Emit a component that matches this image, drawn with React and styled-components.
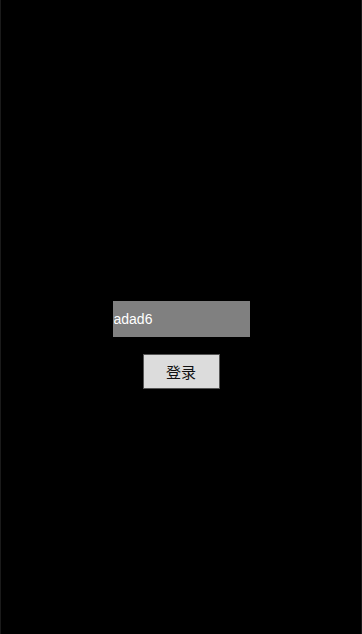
import styled, { createGlobalStyle } from "styled-components";

const GlobalStyle = createGlobalStyle`
  html, body {
    margin: 0;
    padding: 0;
    background: #000;
  }
`;

const Page = styled.div`
  box-sizing: border-box;
  width: 362px;
  height: 634px;
  background: #000;
  border-left: 1px solid #1a1a1a;
  border-right: 1px solid #1a1a1a;
  display: flex;
  flex-direction: column;
  align-items: center;
  padding-top: 301px;
  gap: 17px;
  font-family: "Liberation Sans", "Noto Sans CJK SC", sans-serif;
`;

const NameInput = styled.input`
  box-sizing: border-box;
  width: 137px;
  height: 36px;
  margin-left: 0;
  padding: 0 1px;
  border: none;
  outline: none;
  background: #808080;
  color: #fff;
  font-family: "Liberation Sans", sans-serif;
  font-size: 14px;
`;

const LoginButton = styled.button`
  box-sizing: border-box;
  width: 77px;
  height: 35px;
  background: #dcdcdc;
  border: 1px solid #555;
  color: #111;
  font-family: "Noto Sans CJK SC", sans-serif;
  font-size: 15px;
  padding: 0;
`;

export default function App() {
  return (
    <>
      <GlobalStyle />
      <Page>
        <NameInput defaultValue="adad6" />
        <LoginButton>登录</LoginButton>
      </Page>
    </>
  );
}
